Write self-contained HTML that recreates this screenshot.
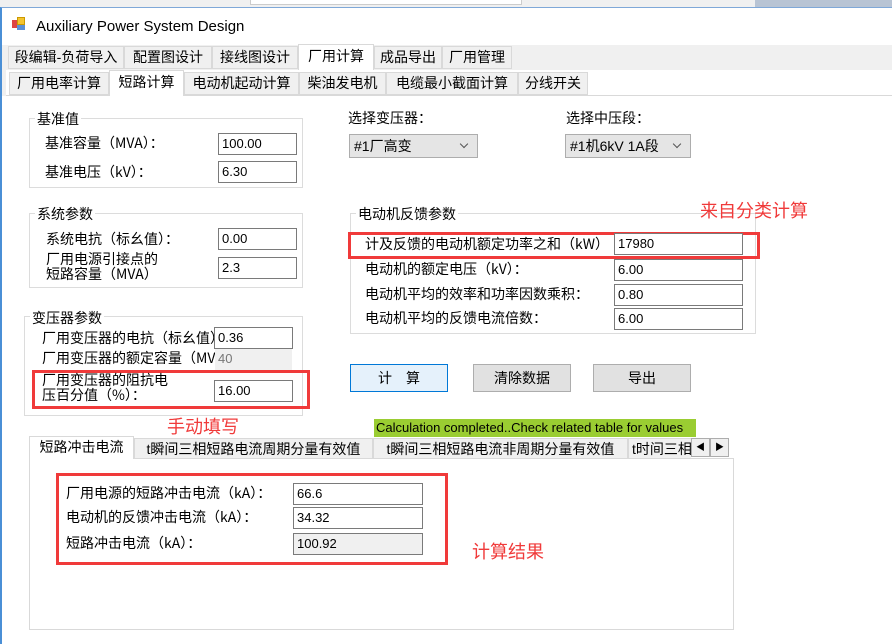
<!DOCTYPE html>
<html><head><meta charset="utf-8"><style>
*{margin:0;padding:0;box-sizing:border-box}
body{width:892px;height:644px;overflow:hidden;background:#fff;position:relative;font-family:"Liberation Sans","Noto Sans CJK SC",sans-serif;font-size:13px;color:#000}
.a{position:absolute;white-space:nowrap}
.tab{position:absolute;background:#f0f0f0;border:1px solid #d9d9d9;font-size:14px;text-align:center;line-height:20px}
.sel{background:#fff;border-bottom:none}
.grp{position:absolute;border:1px solid #dcdcdc}
.lg{position:absolute;background:#fff;padding:0 2px;font-size:14px;line-height:16px;font-family:"Noto Sans CJK SC",sans-serif}
.in{position:absolute;border:1px solid #7a7a7a;background:#fff;font-size:13px;padding-left:3px;line-height:19px}
.lb{position:absolute;font-size:14px;line-height:16px;white-space:nowrap;font-family:"Noto Sans CJK SC",sans-serif}
.red{position:absolute;border:3px solid #f03a3a}
.btn{position:absolute;border:1px solid #adadad;background:#e1e1e1;text-align:center;font-size:14px;line-height:26px}
.cb{position:absolute;border:1px solid #adadad;background:#e5e5e5;font-size:14px;line-height:22px;padding-left:4px}
.cb:after{content:"";position:absolute;right:10px;top:6px;width:5px;height:5px;border-right:1px solid #555;border-bottom:1px solid #555;transform:rotate(45deg)}
.note{position:absolute;color:#f03a3a;font-size:18px;line-height:20px;white-space:nowrap}
</style></head><body>
<div class="a" style="left:0;top:0;width:892px;height:8px;background:#f0f0f0"></div>
<div class="a" style="left:250px;top:0;width:272px;height:5px;background:#fff;border:1px solid #ccc;border-top:none"></div>
<div class="a" style="left:755px;top:0;width:137px;height:8px;background:#b8c4d4"></div>
<div class="a" style="left:0;top:7px;width:892px;height:637px;background:#fff;border-left:2px solid #4a8fd6;border-top:1px solid #7fa8d8"></div>
<div class="a" style="left:12px;top:17px;width:14px;height:14px">
<div class="a" style="left:0;top:3px;width:6px;height:8px;background:#d44"></div>
<div class="a" style="left:5px;top:0;width:8px;height:8px;background:#f4c430;border:1px solid #c90"></div>
<div class="a" style="left:5px;top:8px;width:8px;height:5px;background:#5a8fd6"></div></div>
<div class="a" style="left:36px;top:17px;font-size:15px;line-height:20px">Auxiliary Power System Design</div>
<div class="a" style="left:2px;top:45px;width:890px;height:51px;background:#f0f0f0"></div>
<div class="tab" style="left:8px;top:46px;width:116px;height:23px">段编辑-负荷导入</div>
<div class="tab" style="left:124px;top:46px;width:88px;height:23px">配置图设计</div>
<div class="tab" style="left:212px;top:46px;width:86px;height:23px">接线图设计</div>
<div class="tab sel" style="left:298px;top:44px;width:76px;height:26px;line-height:22px">厂用计算</div>
<div class="tab" style="left:374px;top:46px;width:68px;height:23px">成品导出</div>
<div class="tab" style="left:442px;top:46px;width:70px;height:23px">厂用管理</div>
<div class="a" style="left:6px;top:70px;width:886px;height:26px;background:#fff"></div>
<div class="a" style="left:6px;top:95px;width:886px;height:1px;background:#d9d9d9"></div>
<div class="tab" style="left:9px;top:72px;width:100px;height:23px">厂用电率计算</div>
<div class="tab sel" style="left:109px;top:70px;width:75px;height:26px;line-height:22px">短路计算</div>
<div class="tab" style="left:184px;top:72px;width:115px;height:23px">电动机起动计算</div>
<div class="tab" style="left:299px;top:72px;width:87px;height:23px">柴油发电机</div>
<div class="tab" style="left:386px;top:72px;width:132px;height:23px">电缆最小截面计算</div>
<div class="tab" style="left:518px;top:72px;width:70px;height:23px">分线开关</div>

<div class="grp" style="left:29px;top:118px;width:274px;height:70px"></div>
<div class="lg" style="left:35px;top:111px">基准值</div>
<div class="lb" style="left:45px;top:135px">基准容量（MVA）：</div>
<div class="in" style="left:218px;top:133px;width:79px;height:22px">100.00</div>
<div class="lb" style="left:45px;top:164px">基准电压（kV）：</div>
<div class="in" style="left:218px;top:161px;width:79px;height:22px">6.30</div>

<div class="grp" style="left:29px;top:213px;width:274px;height:75px"></div>
<div class="lg" style="left:35px;top:206px">系统参数</div>
<div class="lb" style="left:46px;top:231px">系统电抗（标幺值）：</div>
<div class="in" style="left:218px;top:228px;width:79px;height:22px">0.00</div>
<div class="lb" style="left:46px;top:252px;line-height:15px">厂用电源引接点的<br>短路容量（MVA）</div>
<div class="in" style="left:218px;top:257px;width:79px;height:22px">2.3</div>

<div class="grp" style="left:24px;top:316px;width:279px;height:100px"></div>
<div class="lg" style="left:30px;top:310px">变压器参数</div>
<div class="lb" style="left:42px;top:330px;width:172px;overflow:hidden">厂用变压器的电抗（标幺值）</div>
<div class="in" style="left:214px;top:327px;width:79px;height:22px">0.36</div>
<div class="lb" style="left:42px;top:350px;width:173px;overflow:hidden">厂用变压器的额定容量（MVA）</div>
<div class="in" style="left:215px;top:349px;width:77px;height:21px;background:#f0f0f0;border:none;color:#777">40</div>
<div class="red" style="left:32px;top:370px;width:278px;height:39px"></div>
<div class="lb" style="left:42px;top:373px;line-height:15px">厂用变压器的阻抗电<br>压百分值（%）：</div>
<div class="in" style="left:214px;top:380px;width:79px;height:22px">16.00</div>
<div class="note" style="left:167px;top:417px">手动填写</div>

<div class="lb" style="left:348px;top:110px">选择变压器：</div>
<div class="cb" style="left:349px;top:134px;width:129px;height:24px">#1厂高变</div>
<div class="lb" style="left:566px;top:110px">选择中压段：</div>
<div class="cb" style="left:565px;top:134px;width:126px;height:24px">#1机6kV 1A段</div>

<div class="grp" style="left:350px;top:213px;width:406px;height:121px"></div>
<div class="lg" style="left:356px;top:206px">电动机反馈参数</div>
<div class="note" style="left:700px;top:201px">来自分类计算</div>
<div class="red" style="left:348px;top:232px;width:412px;height:27px"></div>
<div class="lb" style="left:365px;top:236px">计及反馈的电动机额定功率之和（kW）</div>
<div class="in" style="left:614px;top:233px;width:129px;height:22px;line-height:20px">17980</div>
<div class="lb" style="left:365px;top:261px">电动机的额定电压（kV）：</div>
<div class="in" style="left:614px;top:259px;width:129px;height:22px;line-height:20px">6.00</div>
<div class="lb" style="left:365px;top:286px">电动机平均的效率和功率因数乘积：</div>
<div class="in" style="left:614px;top:284px;width:129px;height:22px;line-height:20px">0.80</div>
<div class="lb" style="left:365px;top:310px">电动机平均的反馈电流倍数：</div>
<div class="in" style="left:614px;top:308px;width:129px;height:22px;line-height:20px">6.00</div>

<div class="btn" style="left:350px;top:364px;width:98px;height:28px;background:#e5f1fb;border-color:#0078d7">计　算</div>
<div class="btn" style="left:473px;top:364px;width:98px;height:28px">清除数据</div>
<div class="btn" style="left:593px;top:364px;width:98px;height:28px">导出</div>

<div class="a" style="left:374px;top:419px;width:322px;height:18px;background:#9acd32;font-size:13px;line-height:18px;padding-left:2px">Calculation completed..Check related table for values</div>

<div class="a" style="left:29px;top:458px;width:705px;height:172px;border:1px solid #d9d9d9;background:#fff"></div>
<div class="a" style="left:29px;top:438px;width:662px;height:20px;background:#f0f0f0;overflow:hidden">
<div class="tab" style="left:105px;top:0;width:239px;height:21px">t瞬间三相短路电流周期分量有效值</div>
<div class="tab" style="left:344px;top:0;width:255px;height:21px">t瞬间三相短路电流非周期分量有效值</div>
<div class="tab" style="left:599px;top:0;width:100px;height:21px;text-align:left;padding-left:3px">t时间三相短路</div>
</div>
<div class="tab sel" style="left:29px;top:436px;width:105px;height:23px;line-height:21px">短路冲击电流</div>
<div class="tab" style="left:691px;top:438px;width:19px;height:19px;font-size:9px;line-height:17px;border-color:#adadad">◀</div>
<div class="tab" style="left:710px;top:438px;width:19px;height:19px;font-size:9px;line-height:17px;border-color:#adadad">▶</div>

<div class="red" style="left:56px;top:473px;width:392px;height:92px"></div>
<div class="lb" style="left:66px;top:485px">厂用电源的短路冲击电流（kA）：</div>
<div class="in" style="left:293px;top:483px;width:130px;height:22px">66.6</div>
<div class="lb" style="left:66px;top:509px">电动机的反馈冲击电流（kA）：</div>
<div class="in" style="left:293px;top:507px;width:130px;height:22px">34.32</div>
<div class="lb" style="left:66px;top:535px">短路冲击电流（kA）：</div>
<div class="in" style="left:293px;top:533px;width:130px;height:22px;background:#f0f0f0">100.92</div>
<div class="note" style="left:472px;top:542px">计算结果</div>
</body></html>
